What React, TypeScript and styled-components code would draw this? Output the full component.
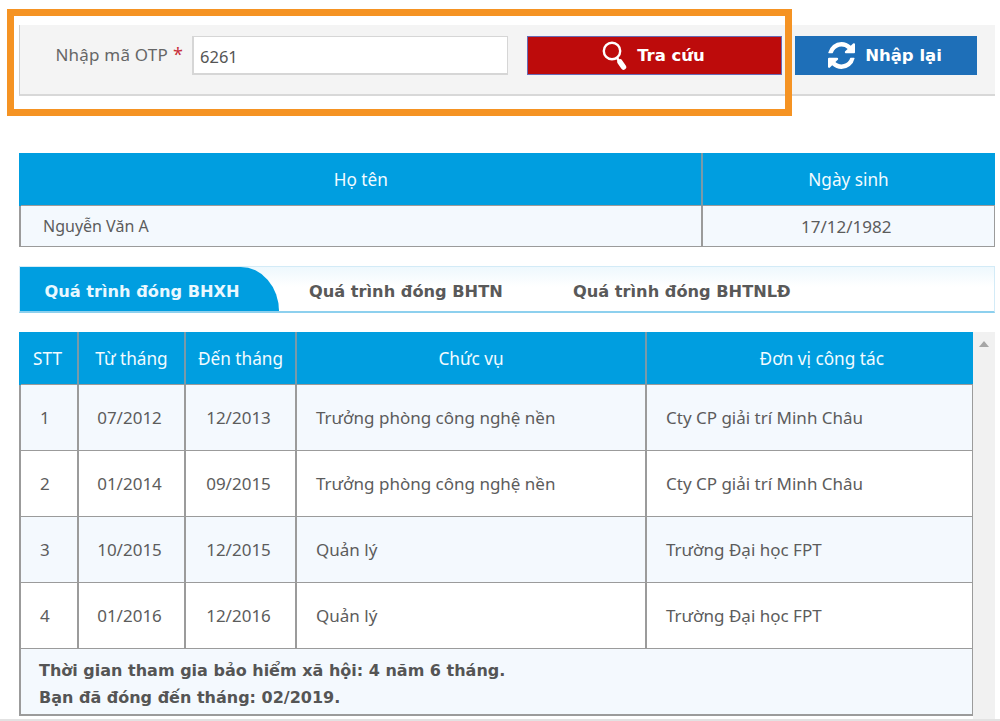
import styled, { createGlobalStyle } from "styled-components";

const GlobalStyle = createGlobalStyle`
  html, body {
    margin: 0;
    background: #fff;
  }
  body {
    font-family: "Noto Sans", "DejaVu Sans", sans-serif;
    color: #555;
    overflow: hidden;
  }
`;

const Page = styled.div`
  position: relative;
  width: 1000px;
  height: 721px;
  box-sizing: border-box;
  padding: 25px 5px 0 19px;
  overflow: hidden;
`;

const OrangeFrame = styled.div`
  position: absolute;
  left: 7px;
  top: 9px;
  width: 785px;
  height: 107px;
  box-sizing: border-box;
  border: 7px solid #f59323;
  pointer-events: none;
`;

const SearchPanel = styled.div`
  display: flex;
  align-items: flex-start;
  height: 71px;
  box-sizing: border-box;
  padding-top: 11px;
  background: #f4f4f4;
  border-left: 1px solid #cfcfcf;
  border-bottom: 2px solid #d8d8d8;
`;

const Label = styled.label`
  width: 172px;
  box-sizing: border-box;
  padding: 6px 9px 0 0;
  text-align: right;
  font-size: 17px;
  letter-spacing: 0.2px;
  line-height: 24px;
  color: #666;
`;

const Star = styled.span`
  color: #c8303a;
  margin-left: 5px;
  font-size: 18px;
`;

const OtpInput = styled.input`
  width: 316px;
  height: 39px;
  box-sizing: border-box;
  padding: 3px 7px 0 6px;
  border: 2px solid #d6d6d6;
  border-width: 1px 1px 2px 2px;
  background: #fff;
  font: 16.5px "Noto Sans", sans-serif;
  color: #555;
  outline: none;
`;

const ActionButton = styled.button<{ $bg: string; $w: number; $ml: number; $edge: string }>`
  display: flex;
  align-items: center;
  justify-content: center;
  gap: 10px;
  width: ${(p) => p.$w}px;
  height: 39px;
  margin-left: ${(p) => p.$ml}px;
  padding: 0 2px 0 0;
  border: 1px solid ${(p) => p.$edge};
  background: ${(p) => p.$bg};
  color: #fff;
  font-family: "DejaVu Sans", sans-serif;
  font-weight: 700;
  font-size: 16.5px;
`;

const InfoTable = styled.table`
  width: 976px;
  margin-top: 57px;
  border-collapse: collapse;
  table-layout: fixed;
`;

const DataTable = styled.table`
  width: 100%;
  border-collapse: collapse;
  table-layout: fixed;
`;

const HeadCell = styled.th<{ $w?: number; $shift?: number }>`
  width: ${(p) => (p.$w ? `${p.$w}px` : "auto")};
  height: 52px;
  padding: 0 0 0 ${(p) => p.$shift ?? 0}px;
  background: #009ee0;
  border-left: 2px solid #7a9aa8;
  color: #f2fbff;
  font-size: 17.2px;
  font-weight: 400;
  &:first-child {
    border-left-color: #009ee0;
  }
`;

const NarrowHead = styled(HeadCell)`
  padding-right: 3px;
`;

const Row = styled.tr<{ $shaded?: boolean }>`
  background: ${(p) => (p.$shaded ? "#f4f9fe" : "#fff")};
`;

const Cell = styled.td<{ $left?: boolean; $h: number; $pad?: number; $size?: number }>`
  height: ${(p) => p.$h}px;
  padding: 0 ${(p) => (p.$left ? 0 : 4)}px 0 ${(p) => p.$pad ?? 0}px;
  border: 2px solid #9b9b9b;
  border-width: 1px 1px 1px 2px;
  text-align: ${(p) => (p.$left ? "left" : "center")};
  font-size: ${(p) => p.$size ?? 17}px;
  color: #5c5c5c;
`;

const Tabs = styled.div`
  display: flex;
  align-items: stretch;
  width: 976px;
  height: 47px;
  margin-top: 19px;
  box-sizing: border-box;
  border: 1px solid #d3ebf7;
  border-bottom: 2px solid #8dd0ee;
  background: linear-gradient(#eef8fd, #fff 45%);
`;

const Tab = styled.div<{ $active?: boolean; $w: number }>`
  width: ${(p) => p.$w}px;
  box-sizing: border-box;
  display: flex;
  align-items: center;
  justify-content: ${(p) => (p.$active ? "center" : "flex-start")};
  font-family: "DejaVu Sans", sans-serif;
  font-weight: 700;
  font-size: 16.2px;
  white-space: nowrap;
  color: ${(p) => (p.$active ? "#e9f8ff" : "#595959")};
  background: ${(p) => (p.$active ? "#009ee0" : "transparent")};
  border-top-right-radius: ${(p) => (p.$active ? "40px 46px" : "0")};
  padding-top: 5px;
  padding-left: ${(p) => (p.$active ? "0" : "30px")};
  padding-right: ${(p) => (p.$active ? "15px" : "0")};
`;

const ScrollArea = styled.div`
  display: flex;
  width: 976px;
  margin-top: 19px;
`;

const TableCol = styled.div`
  width: 954px;
  flex: none;
`;

const ScrollBar = styled.div`
  position: relative;
  width: 22px;
  height: 389px;
  background: #f1f1f1;
  &::before {
    content: "";
    position: absolute;
    left: 6px;
    top: 9px;
    border: 5px solid transparent;
    border-top: none;
    border-bottom: 6px solid #a6a6a6;
  }
`;

const Summary = styled.td`
  height: 66px;
  padding: 5px 0 0 18px;
  box-sizing: border-box;
  border: 2px solid #9b9b9b;
  border-width: 1px 1px 2px 2px;
  font-family: "DejaVu Sans", sans-serif;
  font-weight: 700;
  font-size: 16px;
  line-height: 27px;
  color: #555;
`;

const BottomEdge = styled.div`
  position: absolute;
  left: 0;
  right: 0;
  bottom: 0;
  height: 2px;
  background: #e2e2e2;
`;

const rows = [
  ["1", "07/2012", "12/2013", "Trưởng phòng công nghệ nền", "Cty CP giải trí Minh Châu"],
  ["2", "01/2014", "09/2015", "Trưởng phòng công nghệ nền", "Cty CP giải trí Minh Châu"],
  ["3", "10/2015", "12/2015", "Quản lý", "Trường Đại học FPT"],
  ["4", "01/2016", "12/2016", "Quản lý", "Trường Đại học FPT"],
];

function SearchIcon() {
  return (
    <svg width="25" height="29" viewBox="0 0 25 29" fill="none">
      <circle cx="10" cy="10" r="8.2" stroke="#fff" strokeWidth="2.4" />
      <path d="M15 17 L17 20" stroke="#fff" strokeWidth="2.5" />
      <path d="M18 21 L21.5 26" stroke="#fff" strokeWidth="5.5" strokeLinecap="round" />
    </svg>
  );
}

function RefreshIcon() {
  return (
    <svg width="27" height="27" viewBox="128 128 1536 1536" fill="#fff">
      <path d="M1639 1056q0 5-1 7-64 268-268 434.5t-478 166.5q-146 0-282.5-55t-243.5-157l-129 129q-19 19-45 19t-45-19-19-45v-448q0-26 19-45t45-19h448q26 0 45 19t19 45-19 45l-137 137q71 66 161 102t187 36q134 0 250-65t186-179q11-17 53-117 8-23 30-23h192q13 0 22.5 9.5t9.5 22.5zm25-800v448q0 26-19 45t-45 19h-448q-26 0-45-19t-19-45 19-45l138-138q-148-137-349-137-134 0-250 65t-186 179q-11 17-53 117-8 23-30 23h-199q-13 0-22.5-9.5t-9.5-22.5v-7q65-268 270-434.5t480-166.5q146 0 284 55.5t245 156.5l130-129q19-19 45-19t45 19 19 45z" />
    </svg>
  );
}

export default function App() {
  return (
    <>
      <GlobalStyle />
      <Page>
        <SearchPanel>
          <Label>
            Nhập mã OTP<Star>*</Star>
          </Label>
          <OtpInput defaultValue="6261" />
          <ActionButton $bg="#bd0b0b" $w={255} $ml={19} $edge="#6a6ab4">
            <SearchIcon />
            Tra cứu
          </ActionButton>
          <ActionButton $bg="#1e6fb8" $w={182} $ml={13} $edge="#1e6fb8">
            <RefreshIcon />
            Nhập lại
          </ActionButton>
        </SearchPanel>

        <InfoTable>
          <thead>
            <tr>
              <HeadCell>Họ tên</HeadCell>
              <HeadCell $w={292}>Ngày sinh</HeadCell>
            </tr>
          </thead>
          <tbody>
            <Row $shaded>
              <Cell $left $h={40} $pad={22} $size={16}>Nguyễn Văn A</Cell>
              <Cell $h={40}>17/12/1982</Cell>
            </Row>
          </tbody>
        </InfoTable>

        <Tabs>
          <Tab $active $w={259}>Quá trình đóng BHXH</Tab>
          <Tab $w={264}>Quá trình đóng BHTN</Tab>
          <Tab $w={300}>Quá trình đóng BHTNLĐ</Tab>
        </Tabs>

        <ScrollArea>
          <TableCol>
            <DataTable>
              <thead>
                <tr>
                  <NarrowHead $w={53}>STT</NarrowHead>
                  <HeadCell $w={105}>Từ tháng</HeadCell>
                  <HeadCell $w={109}>Đến tháng</HeadCell>
                  <HeadCell $w={348}>Chức vụ</HeadCell>
                  <HeadCell $shift={24}>Đơn vị công tác</HeadCell>
                </tr>
              </thead>
              <tbody>
                {rows.map((r, i) => (
                  <Row key={r[0]} $shaded={i % 2 === 0}>
                    <Cell $left $h={65} $pad={19}>{r[0]}</Cell>
                    <Cell $h={65}>{r[1]}</Cell>
                    <Cell $h={65}>{r[2]}</Cell>
                    <Cell $left $h={65} $pad={19}>{r[3]}</Cell>
                    <Cell $left $h={65} $pad={19}>{r[4]}</Cell>
                  </Row>
                ))}
                <Row $shaded>
                  <Summary colSpan={5}>
                    Thời gian tham gia bảo hiểm xã hội: 4 năm 6 tháng.
                    <br />
                    Bạn đã đóng đến tháng: 02/2019.
                  </Summary>
                </Row>
              </tbody>
            </DataTable>
          </TableCol>
          <ScrollBar />
        </ScrollArea>

        <OrangeFrame />
        <BottomEdge />
      </Page>
    </>
  );
}
